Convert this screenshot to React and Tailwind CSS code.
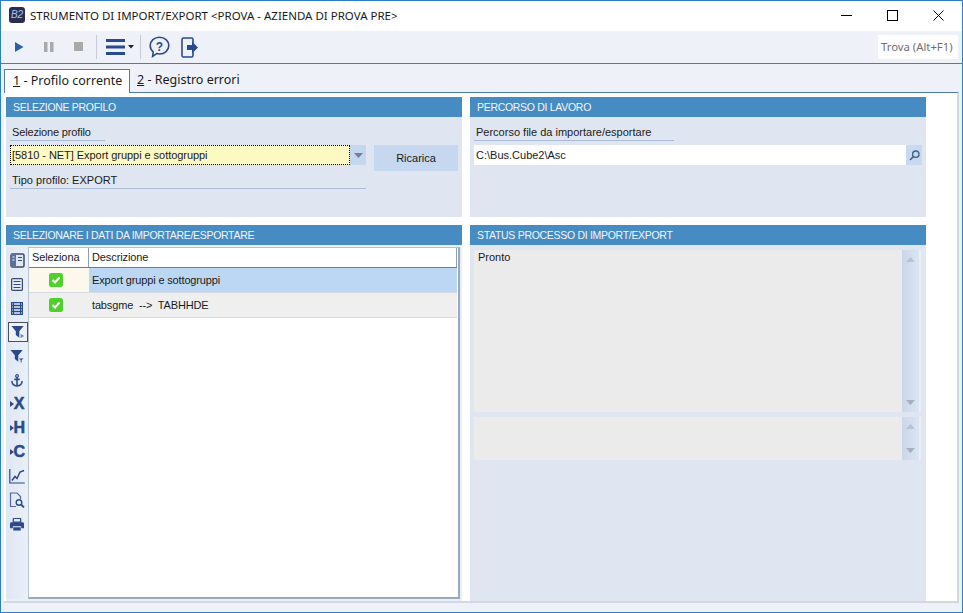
const navy = '#2b4a8c';

function ToolIcon({ children, w = 'w-5' }) {
  return <div className={`${w} h-6 flex items-center justify-center`}>{children}</div>;
}

function Logo() {
  return (
    <div className="w-4 h-4 self-start mt-[6px] rounded-[3px] bg-[#2a2d52] flex items-center justify-center text-[10px] leading-none italic text-[#a9c2ee] font-['Liberation_Sans',sans-serif]">
      B2
    </div>
  );
}

function WindowControls() {
  return (
    <div className="ml-auto self-start mt-[9px] flex items-center pr-[18px] gap-[35px] text-black">
      <svg width="11" height="11" viewBox="0 0 11 11"><path d="M0 5.500h11" stroke="#000" strokeWidth="1" /></svg>
      <svg width="11" height="11" viewBox="0 0 11 11"><rect x="0.500" y="0.500" width="10" height="10" fill="none" stroke="#000" /></svg>
      <svg width="11" height="11" viewBox="0 0 11 11"><path d="M0.500 0.500l10 10M10.500 0.500l-10 10" stroke="#000" strokeWidth="1" /></svg>
    </div>
  );
}

function Toolbar() {
  return (
    <div className="h-[33px] flex items-center bg-[#eef2f8] border-b border-[#4f7ba6] pl-[8px] shrink-0">
      <ToolIcon>
        <svg width="10" height="10" viewBox="0 0 10 10"><path d="M1 0l8.500 5L1 10z" fill="#2f5fa8" /></svg>
      </ToolIcon>
      <div className="w-[10px]" />
      <ToolIcon>
        <svg width="10" height="10" viewBox="0 0 10 10"><path d="M0 0h3.500v10H0zM6 0h3.500v10H6z" fill="#a9a9a9" /></svg>
      </ToolIcon>
      <div className="w-[10px]" />
      <ToolIcon>
        <svg width="10" height="10" viewBox="0 0 10 10"><rect width="9" height="9" fill="#a9a9a9" /></svg>
      </ToolIcon>
      <div className="w-[7px]" />
      <div className="w-px h-6 bg-[#c6ccd6]" />
      <div className="w-[9px]" />
      <svg width="19" height="16" viewBox="0 0 19 16"><path d="M0 1.500h19M0 8h19M0 14.500h19" stroke={navy} strokeWidth="3" /></svg>
      <svg className="ml-[3px]" width="6" height="4" viewBox="0 0 6 4"><path d="M0 0h6L3 3.500z" fill="#222" /></svg>
      <div className="w-[6px]" />
      <div className="w-px h-6 bg-[#c6ccd6]" />
      <div className="w-[8px]" />
      <svg width="21" height="22" viewBox="0 0 21 22">
        <path d="M10.500 1.200c5.200 0 9.300 3.700 9.300 8.400s-4.100 8.400-9.300 8.400c-1 0-2-.1-2.900-.4L3.600 20.400l.6-4.400C2.300 14.500 1.200 12.200 1.200 9.600c0-4.700 4.100-8.400 9.300-8.400z" fill="none" stroke={navy} strokeWidth="1.600" />
        <text x="10.500" y="14.500" textAnchor="middle" fontSize="12" fontWeight="700" fill={navy} fontFamily="Liberation Sans, sans-serif">?</text>
      </svg>
      <div className="w-[11px]" />
      <svg width="17" height="21" viewBox="0 0 17 21">
        <path d="M12 6V2.500Q12 1 10.500 1H2.500Q1 1 1 2.500v16Q1 20 2.500 20h8Q12 20 12 18.500V15" fill="none" stroke={navy} strokeWidth="1.600" />
        <path d="M6 8h5V4.500l6 6-6 6V13H6z" fill={navy} />
      </svg>
      <div className="ml-auto mr-[4px] w-[80px] h-[24px] bg-white flex items-center pl-[3px] text-[11.3px] text-[#6f6f78] font-['Noto_Sans',sans-serif] whitespace-nowrap">
        Trova (Alt+F1)
      </div>
    </div>
  );
}

function Tabs() {
  return (
    <div className="h-[28px] shrink-0 flex items-end pl-[3px] bg-[#eef2f8] text-[12.5px] text-[#1a1a1a] font-['Noto_Sans',sans-serif]">
      <div className="relative z-10 h-[24px] -mb-px w-[126px] pl-[8px] flex items-center bg-white border border-b-0 border-[#4f7ba6] whitespace-nowrap">
        <span className="underline">1</span>&nbsp;- Profilo corrente
      </div>
      <div className="h-[23px] pl-[7px] flex items-center whitespace-nowrap">
        <span className="underline">2</span>&nbsp;- Registro errori
      </div>
    </div>
  );
}

function PanelHeader({ children }) {
  return (
    <div className="h-[20px] shrink-0 bg-[#468bc2] text-[#f1f6fb] text-[10.5px] tracking-[-0.3px] leading-[21px] pl-[7px] whitespace-nowrap">
      {children}
    </div>
  );
}

function Caret({ up, color = '#8a97ad' }) {
  return (
    <svg width="9" height="5" viewBox="0 0 9 5">
      <path d={up ? 'M4.500 0L9 5H0z' : 'M0 0h9L4.500 5z'} fill={color} />
    </svg>
  );
}

function ScrollBox({ h, text }) {
  return (
    <div className={`${h} flex bg-[#ebebeb] border-r-[2px] border-[#e9eff6]`}>
      <div className="flex-1 pl-[4px] text-[11px] leading-[14px] text-[#1a1a1a]">{text}</div>
      <div className="w-[17px] flex flex-col items-center justify-between py-[7px] bg-gradient-to-r from-[#c9d7ea] to-[#dbe5f2]">
        <Caret up color="#b7c2d4" />
        <Caret color="#a4afc3" />
      </div>
    </div>
  );
}

function ProfilePanel() {
  return (
    <div className="h-[120px] bg-[#dfe6f1] flex flex-col">
      <PanelHeader>SELEZIONE PROFILO</PanelHeader>
      <div className="pl-[4px] pr-[4px]">
        <div className="h-[24px] w-[95px] border-b border-[#a9bcd8] pl-[2px] pt-[8px] text-[11px] tracking-[-0.15px] leading-[14px] text-[#1a1a1a] whitespace-nowrap">
          Selezione profilo
        </div>
        <div className="mt-[4px] flex gap-[8px]">
          <div className="flex-1 min-w-0">
            <div className="flex h-[20px]">
              <div className="flex-1 bg-[#fdf9c3] border border-dotted border-black pl-[1px] text-[11px] tracking-[-0.05px] leading-[18px] text-[#1a1a1a] whitespace-nowrap">
                [5810 - NET] Export gruppi e sottogruppi
              </div>
              <div className="w-[16px] bg-[#c3d7ee] flex items-center justify-center">
                <Caret color="#71809a" />
              </div>
            </div>
            <div className="h-[24px] border-b border-[#a9bcd8] pl-[2px] pt-[8px] text-[11px] leading-[14px] text-[#1a1a1a] whitespace-nowrap">
              Tipo profilo: EXPORT
            </div>
          </div>
          <div className="w-[84px] h-[26px] bg-[#c5d8ef] flex items-center justify-center text-[11px] text-[#1a1a1a]">
            Ricarica
          </div>
        </div>
      </div>
    </div>
  );
}

function PathPanel() {
  return (
    <div className="h-[120px] bg-[#dfe6f1] flex flex-col">
      <PanelHeader>PERCORSO DI LAVORO</PanelHeader>
      <div className="pl-[4px] pr-[4px]">
        <div className="h-[24px] w-[200px] border-b border-[#a9bcd8] pl-[2px] pt-[8px] text-[11px] leading-[14px] text-[#1a1a1a] whitespace-nowrap">
          Percorso file da importare/esportare
        </div>
        <div className="mt-[4px] flex h-[20px]">
          <div className="flex-1 bg-white pl-[2px] text-[11px] leading-[20px] text-[#1a1a1a]">C:\Bus.Cube2\Asc</div>
          <div className="w-[16px] bg-[#c8daf0] flex items-center justify-center">
            <svg width="11" height="11" viewBox="0 0 11 11">
              <circle cx="6.800" cy="4.200" r="3.200" fill="none" stroke="#3f5f86" strokeWidth="1.300" />
              <path d="M4.500 6.500L1 10" stroke="#3f5f86" strokeWidth="1.600" />
            </svg>
          </div>
        </div>
      </div>
    </div>
  );
}

function SideTrack({ children, selected }) {
  if (selected) {
    return (
      <div className="h-[20px] my-[2px] ml-[1.5px] w-[20px] flex items-center justify-center border border-[#4a4f5a] bg-[#eef2f8]">
        {children}
      </div>
    );
  }
  return <div className="h-[24px] flex items-center justify-center">{children}</div>;
}

function LetterIcon({ letter }) {
  return (
    <div className="flex items-center">
      <svg width="4" height="6" viewBox="0 0 4 6"><path d="M0 0l4 3-4 3z" fill={navy} /></svg>
      <span className="text-[16px] leading-none font-bold text-[#2b4a8c] [-webkit-text-stroke:0.5px_#2b4a8c] font-['Liberation_Sans',sans-serif] w-[11px] text-center">{letter}</span>
    </div>
  );
}

function FunnelIcon({ small }) {
  return (
    <svg width="14" height="14" viewBox="0 0 16 15">
      <path d="M0.500 0.500h14L9.500 6.500V14L5.500 11V6.500z" fill={navy} />
      {small
        ? <path d="M10 10h5.500l-2 2.300V15h-1.500v-2.700z" fill={navy} stroke="#e4ebf5" strokeWidth="0.500" />
        : <path d="M11 9.500l4 2.500-4 2.500z" fill="#6d88b3" />}
    </svg>
  );
}

function SideIcons() {
  return (
    <div className="w-[22px] shrink-0 pt-[1px] flex flex-col bg-gradient-to-r from-[#dfe7f3] to-[#eaf0f8]">
      <SideTrack>
        <svg width="15" height="15" viewBox="0 0 15 15">
          <rect x="1" y="1" width="13" height="13" rx="1.500" fill="#dfe7f3" stroke="#3b4a66" strokeWidth="1.500" />
          <rect x="1" y="1" width="5" height="13" fill="#5a6f9c" />
          <path d="M8 4.500h4M8 7.500h4" stroke="#3b4a66" />
          <path d="M2.500 4h2M2.500 7h2" stroke="#fff" />
        </svg>
      </SideTrack>
      <SideTrack>
        <svg width="12" height="13" viewBox="0 0 12 13">
          <rect x="0.600" y="0.600" width="10.800" height="11.800" rx="1" fill="none" stroke="#3b4a66" strokeWidth="1.200" />
          <path d="M2.500 3.500h7M2.500 6.500h7M2.500 9.500h7" stroke={navy} />
        </svg>
      </SideTrack>
      <SideTrack>
        <svg width="12" height="13" viewBox="0 0 12 13">
          <rect x="0.600" y="0.600" width="10.800" height="11.800" fill="none" stroke={navy} strokeWidth="1.300" />
          <path d="M0 3.500h12M0 6.500h12M0 9.500h12" stroke={navy} strokeWidth="1.500" />
          <path d="M2.500 0v13M9.500 0v13" stroke={navy} />
        </svg>
      </SideTrack>
      <SideTrack selected><FunnelIcon /></SideTrack>
      <SideTrack><FunnelIcon small /></SideTrack>
      <SideTrack>
        <svg width="12" height="13" viewBox="0 0 13 14">
          <circle cx="6.500" cy="2.200" r="1.500" fill="none" stroke={navy} strokeWidth="1.300" />
          <path d="M6.500 3.500V12.500M3.500 5.800h6" stroke={navy} strokeWidth="1.700" />
          <path d="M1 7.500c0 3.500 2.500 5.200 5.500 5.500 3-.3 5.500-2 5.500-5.500" fill="none" stroke={navy} strokeWidth="1.700" />
        </svg>
      </SideTrack>
      <SideTrack><LetterIcon letter="X" /></SideTrack>
      <SideTrack><LetterIcon letter="H" /></SideTrack>
      <SideTrack><LetterIcon letter="C" /></SideTrack>
      <SideTrack>
        <svg width="16" height="16" viewBox="0 0 16 16">
          <path d="M0.800 1v14h15" fill="none" stroke={navy} strokeWidth="1.200" />
          <path d="M3 12.500l3-4 2 2 3-6.500 4-1.500" fill="none" stroke={navy} strokeWidth="1.500" />
        </svg>
      </SideTrack>
      <SideTrack>
        <svg width="16" height="16" viewBox="0 0 16 16">
          <path d="M7 14.500H1.500V1h6.500l3.500 3.500V7" fill="none" stroke="#52699a" strokeWidth="1.200" />
          <circle cx="10" cy="10.500" r="2.800" fill="none" stroke={navy} strokeWidth="1.400" />
          <path d="M12 12.500l3 3" stroke={navy} strokeWidth="1.800" />
        </svg>
      </SideTrack>
      <SideTrack>
        <svg width="14" height="13" viewBox="0 0 15 14">
          <path d="M3.500 4.500V1.500Q3.500 .5 4.500 .5h6q1 0 1 1v3z" fill="none" stroke={navy} strokeWidth="1.300" />
          <path d="M1.500 4.500h12q1.500 0 1.500 1.500v5h-3V9H3v2H0V6q0-1.500 1.500-1.500z" fill={navy} />
          <rect x="3.500" y="10" width="8" height="3.500" fill={navy} />
        </svg>
      </SideTrack>
    </div>
  );
}

function CheckBox() {
  return (
    <svg width="14" height="14" viewBox="0 0 14 14">
      <rect width="14" height="14" rx="2.500" fill="#4fd02c" />
      <path d="M3.500 7l2.500 2.500L10.500 4.500" fill="none" stroke="#fff" strokeWidth="2" />
    </svg>
  );
}

function GridRow({ first, label }) {
  return (
    <div className={`h-[25px] w-[428px] flex border-b border-[#d6dbe3] ${first ? '' : 'bg-[#efefef]'}`}>
      <div className={`w-[60px] shrink-0 pr-[6px] flex items-center justify-center ${first ? 'bg-[#fdf8ec]' : ''}`}>
        <CheckBox />
      </div>
      <div className={`flex-1 pl-[3px] text-[11px] tracking-[-0.15px] leading-[24px] text-[#1a1a1a] whitespace-pre ${first ? 'bg-[#bcd7f4]' : ''}`}>
        {label}
      </div>
    </div>
  );
}

function DataPanel() {
  return (
    <div className="h-[376px] bg-[#e8eff7] flex flex-col">
      <PanelHeader>SELEZIONARE I DATI DA IMPORTARE/ESPORTARE</PanelHeader>
      <div className="flex-1 flex min-h-0 pt-[2px] pb-[2px] pr-[2px]">
        <SideIcons />
        <div className="flex-1 bg-white border-r-[2px] border-b-[2px] border-t border-l border-[#b5c2d4] border-r-[#9aa9c0] border-b-[#9aa9c0]">
          <div className="h-[20px] w-[428px] flex border-b border-[#6e7d94] text-[11px] tracking-[-0.1px] leading-[19px] text-[#1a1a1a]">
            <div className="w-[60px] shrink-0 pl-[3px] border-r border-[#8f9fb6]">Seleziona</div>
            <div className="flex-1 pl-[3px] border-r border-[#8f9fb6]">Descrizione</div>
          </div>
          <GridRow first label="Export gruppi e sottogruppi" />
          <GridRow label="tabsgme  -->  TABHHDE" />
        </div>
      </div>
    </div>
  );
}

function StatusPanel() {
  return (
    <div className="h-[376px] bg-[#dfe6f1] flex flex-col">
      <PanelHeader>STATUS PROCESSO DI IMPORT/EXPORT</PanelHeader>
      <div className="pl-[4px] pr-[5px] pt-[5px] flex flex-col gap-[5px]">
        <ScrollBox h="h-[162px]" text="Pronto" />
        <ScrollBox h="h-[43px]" />
      </div>
    </div>
  );
}

export default function App() {
  return (
    <div className="w-[963px] h-[613px] flex flex-col bg-[#eef2f8] border-x border-b border-[#2a80c8] font-['Liberation_Sans',sans-serif] overflow-hidden">
      <div className="h-[31px] shrink-0 bg-white flex items-center pl-[8px] border-t border-[#2a80c8]">
        <Logo />
        <div className="ml-[5px] text-[11.5px] text-[#1a1a1a] font-['Noto_Sans',sans-serif] whitespace-nowrap">
          STRUMENTO DI IMPORT/EXPORT &lt;PROVA - AZIENDA DI PROVA PRE&gt;
        </div>
        <WindowControls />
      </div>
      <Toolbar />
      <Tabs />
      <div className="ml-[3px] mr-[3px] h-[511px] shrink-0 bg-white border-t border-r-[2px] border-b-[2px] border-[#4f7ba6] border-r-[#d3d7de] border-b-[#d3d7de] pl-[2px] pt-[4px]">
        <div className="grid grid-cols-[456px_456px] grid-rows-[120px_376px] gap-[8px]">
          <ProfilePanel />
          <PathPanel />
          <DataPanel />
          <StatusPanel />
        </div>
      </div>
    </div>
  );
}
